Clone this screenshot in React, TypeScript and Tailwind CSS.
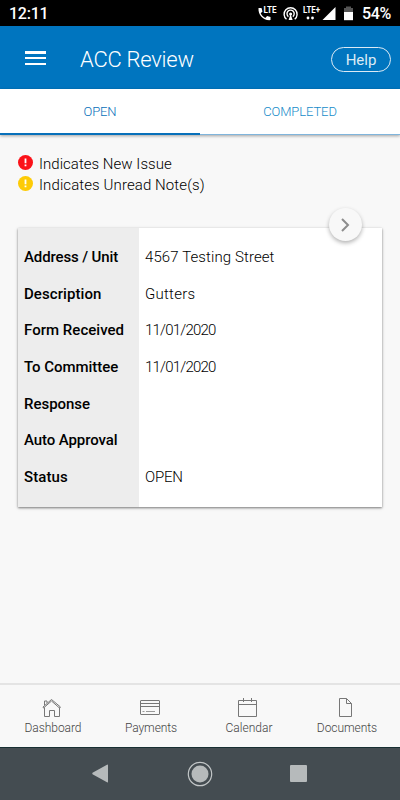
const legend = [
  { label: "Indicates New Issue", color: "text-[#fb1219]", tracking: "tracking-[0.03px]" },
  { label: "Indicates Unread Note(s)", color: "text-[#fdcb06]", tracking: "tracking-[0.1px]" },
];

const rows = [
  { label: "Address / Unit", value: "4567 Testing Street", labelClass: "tracking-[-0.12px]", valueClass: "tracking-[0.1px]" },
  { label: "Description", value: "Gutters", labelClass: "tracking-[0.08px]", valueClass: "tracking-[0.25px]" },
  { label: "Form Received", value: "11/01/2020", labelClass: "tracking-[0.03px]", valueClass: "tracking-[-0.8px]" },
  { label: "To Committee", value: "11/01/2020", labelClass: "tracking-[-0.04px]", valueClass: "tracking-[-0.8px]" },
  { label: "Response", value: "", labelClass: "tracking-[-0.02px]", valueClass: "" },
  { label: "Auto Approval", value: "", labelClass: "tracking-[-0.1px]", valueClass: "" },
  { label: "Status", value: "OPEN", labelClass: "tracking-[0.1px]", valueClass: "tracking-[-0.2px]" },
];

function StatusBar() {
  return (
    <div className="flex h-[26px] items-center justify-between bg-black pt-[2px] pr-[9px] pl-[9px] text-base font-medium text-white">
      <span className="tracking-[-0.25px]">12:11</span>
      <div className="flex items-center">
        <svg className="h-5 w-[105px]" viewBox="257 4 105 20" fill="white">
          <path d="M258.5 8h3l1 3.5-1.8 1.8c1 2 2.4 3.5 4.6 4.6l1.8-1.8 3.4 1v3c-7.5.5-12.5-5-12-12.1Z" />
          <text x="263.5" y="12.5" textLength="13" lengthAdjust="spacingAndGlyphs" className="font-[Roboto] text-[8.5px] font-bold">LTE</text>
          <g fill="none" stroke="white" strokeWidth="1.4">
            <path d="M286.5 19.3a6.5 6.5 0 1 1 8.2 0" />
            <path d="M288.4 16.6a3.6 3.6 0 1 1 4.4 0" />
          </g>
          <circle cx="290.6" cy="14" r="1.5" />
          <path d="m290.6 14-2 6h4Z" />
          <text x="303" y="12.5" textLength="17" lengthAdjust="spacingAndGlyphs" className="font-[Roboto] text-[9px] font-bold">LTE+</text>
          <circle cx="308" cy="18" r="1.4" />
          <circle cx="312.5" cy="18" r="1.4" />
          <path d="M322.5 20h13V7Z" />
          <path d="M346 6.5h5V8h2v4h-9V8h2Z" fill="#555" />
          <path d="M344 12h9v8.2h-9Z" />
        </svg>
        <span className="w-[29px] whitespace-nowrap tracking-[-0.3px]">54%</span>
      </div>
    </div>
  );
}

function Header() {
  return (
    <header className="flex h-[63px] items-center bg-[#0075bf] pt-[3px] pr-[9px] pl-[25px] text-white">
      <div className="mb-[2px] flex h-[14px] w-[21px] flex-col justify-between">
        <span className="h-[2.5px] bg-white" />
        <span className="h-[2.5px] bg-white" />
        <span className="h-[2.5px] bg-white" />
      </div>
      <h1 className="ml-[34px] text-[22px] font-light tracking-[-0.25px]">ACC Review</h1>
      <button className="ml-auto flex h-[25px] w-[60px] items-center justify-center rounded-full border border-[#dceaf5] pt-[2px] text-[15px] font-normal text-[#dcebf5]">
        Help
      </button>
    </header>
  );
}

function Legend() {
  return (
    <div className="mt-[18px] ml-[18px] text-[15px] font-light text-black">
      {legend.map((item) => (
        <div key={item.label} className="flex h-[21px] items-center gap-[6px]">
          <svg className={`mb-[2px] size-[15px] ${item.color}`} viewBox="0 0 15 15">
            <circle cx="7.5" cy="7.5" r="7.5" fill="currentColor" />
            <path d="M6.6 3.5h1.8v4.7H6.6ZM6.6 9.6h1.8v1.6H6.6Z" fill="white" />
          </svg>
          <span className={`mt-px whitespace-nowrap ${item.tracking}`}>{item.label}</span>
        </div>
      ))}
    </div>
  );
}

function ReviewCard() {
  return (
    <section className="relative mx-[18px] mt-[33px] h-[279px] bg-[linear-gradient(to_right,#ededed_121px,white_121px)] pt-[11px] text-[15px] text-black shadow-[0_1px_2px_rgba(0,0,0,0.42),0_1px_4px_rgba(0,0,0,0.15)]">
      {rows.map((row) => (
        <div key={row.label} className="flex h-[36.66px] items-center whitespace-nowrap">
          <div className={`w-[121px] pl-[6px] font-medium ${row.labelClass}`}>{row.label}</div>
          <div className={`pl-[6px] font-light ${row.valueClass}`}>{row.value}</div>
        </div>
      ))}
      <button className="absolute -top-5 right-5 flex size-[33px] items-center justify-center rounded-full bg-[#f8f8f8] shadow-[0_2px_4px_rgba(0,0,0,0.3)]">
        <svg className="h-[14px] w-[9px]" viewBox="0 0 9 14" fill="none" stroke="#8d8d8d" strokeWidth="2">
          <path d="m1 1 6 6-6 6" />
        </svg>
      </button>
    </section>
  );
}

function BottomTabs() {
  return (
    <nav className="mt-auto flex h-[64px] justify-around border-t-2 border-[#e4e4e4] bg-[#f8f8f8] px-1 pt-[13px] text-xs font-light text-[#444]">
      <div className="flex w-[98px] flex-col items-center">
        <svg className="mr-[2px] h-5 w-5" viewBox="0 0 20 20" fill="none" stroke="#777" strokeWidth="1">
          <path d="m1 9 8.5-7.5L18.5 9l-1 1-8-7-8 7Z" />
          <path d="M2.5 9.500v9h5v-6h5v6h5v-9M2.500 7V3H5v2" />
        </svg>
        <span className="mt-[2px] tracking-[-0.05px]">Dashboard</span>
      </div>
      <div className="flex w-[98px] flex-col items-center">
        <svg className="mr-[2px] h-5 w-5" viewBox="0 0 20 20" fill="none" stroke="#777" strokeWidth="1">
          <rect x=".5" y="2.5" width="19" height="14" rx=".5" />
          <path d="M.5 5.5h19M.5 8.500h19" />
          <path d="M2.5 13.500h2M6 13.500h9" stroke="#999" />
        </svg>
        <span className="mt-[2px] tracking-[-0.1px]">Payments</span>
      </div>
      <div className="flex w-[98px] flex-col items-center">
        <svg className="mr-[2px] h-5 w-5" viewBox="0 0 20 20" fill="none" stroke="#777" strokeWidth="1">
          <path d="M.5 2.500h18v16H.5ZM.5 6.500h18M5.500 0v4M13.500 0v4" />
        </svg>
        <span className="mt-[2px]">Calendar</span>
      </div>
      <div className="flex w-[98px] flex-col items-center">
        <svg className="mr-[2px] h-5 w-5" viewBox="0 0 20 20" fill="none" stroke="#777" strokeWidth="1">
          <path d="M3.500.5h7l5 5v13h-12ZM10.500.5v5h5" />
        </svg>
        <span className="mt-[2px] tracking-[-0.05px]">Documents</span>
      </div>
    </nav>
  );
}

function SystemNav() {
  return (
    <div className="flex h-[53px] items-center justify-between border-t border-[#182f33] bg-[#444c51] pr-[93px] pb-px pl-[92px]">
      <svg className="h-[19px] w-[17px]" viewBox="0 0 17 19" fill="#b6babb">
        <path d="M15 .7Q16 0 16 1.500v16Q16 19 15 18.200L.5 10.200Q0 9.500.5 8.700Z" />
      </svg>
      <svg className="size-[26px]" viewBox="0 0 26 26">
        <circle cx="13" cy="13" r="11.7" fill="none" stroke="#c3c7c8" strokeWidth="1.2" />
        <circle cx="13" cy="13" r="8.5" fill="#b6babb" />
      </svg>
      <span className="size-[17px] rounded-[1px] bg-[#b6babb]" />
    </div>
  );
}

export default function App() {
  return (
    <div className="flex h-[800px] w-[400px] flex-col overflow-hidden bg-[#f8f8f8] font-[Roboto,sans-serif]">
      <StatusBar />
      <Header />
      <div className="grid h-[46px] grid-cols-2 bg-white text-center text-[13px] font-light shadow-[0_1px_3px_rgba(0,0,0,0.35)]">
        <div className="border-b-2 border-[#0870ba] pt-[13px] tracking-[-0.1px] text-[#0870ba]">OPEN</div>
        <div className="border-b border-[#80b5dc] pt-[13px] tracking-[-0.1px] text-[#168bc9]">COMPLETED</div>
      </div>
      <Legend />
      <ReviewCard />
      <BottomTabs />
      <SystemNav />
    </div>
  );
}
